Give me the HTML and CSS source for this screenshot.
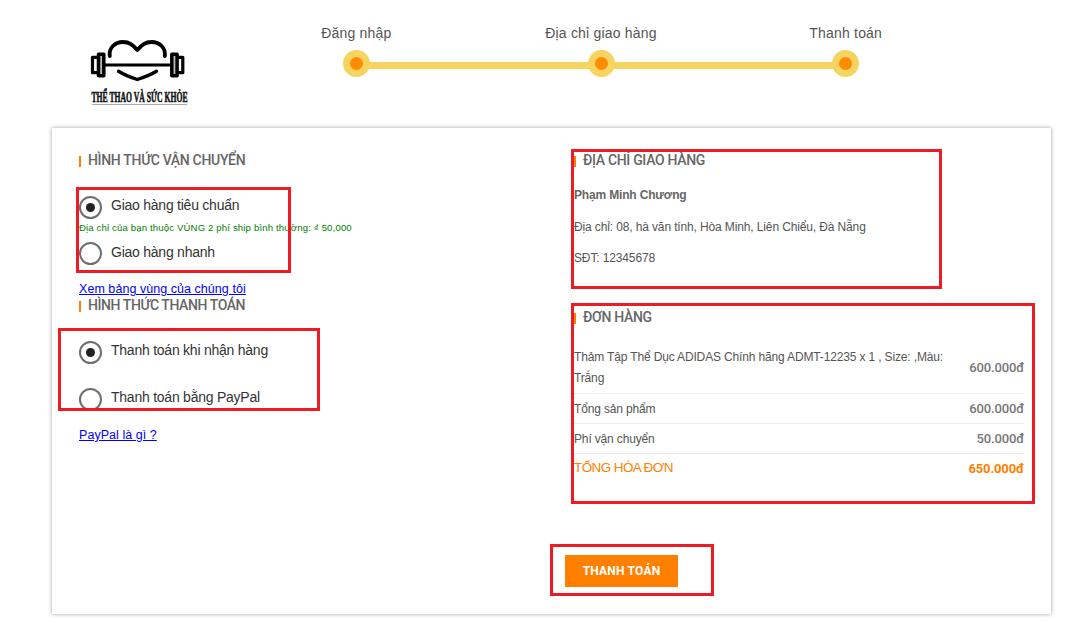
FILE: index.html
```html
<!DOCTYPE html>
<html lang="vi">
<head>
<meta charset="utf-8">
<title>Thanh toán</title>
<link rel="stylesheet" href="styles.css">
</head>
<body>
<header class="header">
  <svg class="logo" viewBox="0 0 100 72" role="img" aria-label="Thể thao và sức khỏe">
    <g fill="none" stroke="#000" stroke-linecap="round" stroke-linejoin="round">
      <path stroke-width="3.8" d="M19.800 20C18.500 12 25 6 33 6C40 6 43 9.500 47.300 14C51.600 9.500 54.600 6 61.600 6C69.600 6 76 12 74.800 20"/>
      <path stroke-width="3.4" d="M28.500 35.300Q36 40 47.300 43.500Q58.600 40 66.500 35.300"/>
      <path stroke-width="3.200" stroke-linecap="butt" d="M15 29H81"/>
      <path fill="#bbb" stroke-width="3.500" d="M8.500 18.300H13.800V39.700H8.500ZM81.800 18.300H87.100V39.700H81.800Z"/>
      <path stroke-width="3.200" d="M7 21.300H2.500V36.700H7M88.500 21.300H92.800V36.700H88.500"/>
    </g>
    <text class="logo-text" x="1.500" y="65.500" textLength="96" lengthAdjust="spacingAndGlyphs">THỂ THAO VÀ SỨC KHỎE</text>
    <path d="M2 68.500H97" stroke="#aaa" stroke-width="1"/>
  </svg>
  <ol class="steps">
    <li class="step"><span class="step-label">Đăng nhập</span><span class="dot"></span></li>
    <li class="step"><span class="step-label">Địa chỉ giao hàng</span><span class="dot"></span></li>
    <li class="step"><span class="step-label">Thanh toán</span><span class="dot"></span></li>
  </ol>
</header>
<main class="card">
  <section class="methods">
    <h2 class="title">HÌNH THỨC VẬN CHUYỂN</h2>
    <div class="shipping">
      <label class="option"><span class="radio checked"></span><span class="option-label">Giao hàng tiêu chuẩn</span></label>
      <p class="fee">Địa chỉ của bạn thuộc VÙNG 2 phí ship bình thường: ₫ 50,000</p>
      <label class="option"><span class="radio"></span><span class="option-label express">Giao hàng nhanh</span></label>
    </div>
    <a class="link" href="#">Xem bảng vùng của chúng tôi</a>
    <h2 class="title payment-title">HÌNH THỨC THANH TOÁN</h2>
    <div class="payment">
      <label class="option"><span class="radio checked"></span><span class="option-label">Thanh toán khi nhận hàng</span></label>
      <label class="option"><span class="radio"></span><span class="option-label">Thanh toán bằng PayPal</span></label>
    </div>
    <a class="link" href="#">PayPal là gì ?</a>
  </section>
  <section class="summary">
    <h2 class="title">ĐỊA CHỈ GIAO HÀNG</h2>
    <div class="address">
      <strong class="name">Phạm Minh Chương</strong>
      <span>Địa chỉ: 08, hà văn tính, Hòa Minh, Liên Chiểu, Đà Nẵng</span>
      <span class="phone">SĐT: 12345678</span>
    </div>
    <h2 class="title">ĐƠN HÀNG</h2>
    <div class="order">
      <div class="row product"><span class="item">Thảm Tập Thể Dục ADIDAS Chính hãng ADMT-12235 x 1 , Size: ,Màu: Trắng</span><b class="price">600.000đ</b></div>
      <div class="row"><span>Tổng sản phẩm</span><b class="price">600.000đ</b></div>
      <div class="row"><span>Phí vận chuyển</span><b class="price">50.000đ</b></div>
      <div class="row total"><span class="total-label">TỔNG HÓA ĐƠN</span><b class="price">650.000đ</b></div>
    </div>
    <button class="pay">THANH TOÁN</button>
  </section>
</main>
<div class="mark mark-shipping"></div>
<div class="mark mark-payment"></div>
<div class="mark mark-address"></div>
<div class="mark mark-order"></div>
<div class="mark mark-pay"></div>
</body>
</html>
```

FILE: styles.css
```css
* { box-sizing: border-box; }
body {
  margin: 0;
  height: 622px;
  overflow: hidden;
  position: relative;
  background: #fff;
  color: #555;
  font: 12px/20px "Liberation Sans", Arial, sans-serif;
}
.header { display: flex; height: 128px; padding-left: 90px; }
.logo { width: 100px; height: 72px; margin: 36px 44px 0 0; overflow: visible; }
.logo-text { font: bold 15px "Liberation Serif", serif; fill: #111; stroke: #111; stroke-width: .6px; }
.steps {
  display: flex;
  width: 734px;
  height: 77px;
  margin: 0;
  padding: 23px 0 0;
  list-style: none;
  background: linear-gradient(#f7d35f, #f7d35f) 123px 62px / 489px 7px no-repeat;
}
.step { flex: 1; display: flex; flex-direction: column; align-items: center; gap: 7px; }
.step-label { font-size: 14px; letter-spacing: .2px; white-space: nowrap; }
.dot { width: 27px; height: 27px; border: 7px solid #f7d35f; border-radius: 50%; background: #ff8c00; }

.card {
  display: flex;
  width: 999px;
  height: 486px;
  margin-left: 52px;
  padding: 22px 27px 0;
  background: #fff;
  box-shadow: 0 0 4px rgba(0, 0, 0, .38);
}
.methods { width: 495px; }
.summary { width: 450px; }
.title {
  display: flex;
  align-items: center;
  height: 20px;
  margin: 0;
  color: #666;
  font: 500 14px/20px Roboto, sans-serif;
  letter-spacing: -.32px;
  white-space: nowrap;
}
.title::before { content: ""; width: 2px; height: 11px; margin: 2px 7px 0 0; background: #ff8000; }
.payment-title { letter-spacing: -.42px; }

.shipping { padding-top: 23px; height: 109px; }
.option { display: flex; gap: 9px; height: 29px; }
.radio {
  display: flex;
  align-items: center;
  justify-content: center;
  width: 23px;
  height: 23px;
  margin-top: 3px;
  border: 2px solid #6e6e6e;
  border-radius: 50%;
}
.checked::after { content: ""; width: 9px; height: 9px; border-radius: 50%; background: #212121; }
.option-label { margin-top: 2px; color: #333; font-size: 14px; letter-spacing: -.24px; white-space: nowrap; }
.express { margin-top: 3px; }
.fee { margin: 0 0 1px; height: 16px; color: #008000; font-size: 9.6px; line-height: 12px; letter-spacing: .14px; white-space: nowrap; }
.link { display: block; width: max-content; height: 16px; color: #00f; font-size: 12.5px; line-height: 21px; letter-spacing: .05px; }
.payment { display: flex; flex-direction: column; gap: 18px; padding-top: 23px; height: 110px; }

.address { display: flex; flex-direction: column; padding-top: 15px; height: 137px; letter-spacing: -.13px; }
.name { color: #666; margin-bottom: 12px; letter-spacing: -.17px; }
.phone { margin-top: 11px; }
.order { margin-top: 20px; letter-spacing: -.15px; }
.row { display: flex; align-items: center; justify-content: space-between; height: 30px; border-bottom: 1px solid #ebebeb; }
.product { height: 47px; line-height: 21px; padding-bottom: 4px; }
.item { width: 375px; }
.price { color: #777; font: 500 13px/20px Roboto, sans-serif; letter-spacing: -.15px; }
.total { border: 0; color: #ff8000; }
.total-label { font-size: 13.5px; letter-spacing: -.6px; padding-bottom: 2px; }
.total .price { color: #ff8000; font-weight: 700; }
.pay {
  display: block;
  width: 113px;
  height: 32px;
  margin: 71px 0 0 -9px;
  padding: 1px 0 0;
  border: 0;
  background: #ff8000;
  color: #fff;
  font: bold 12px/31px Roboto, sans-serif;
  letter-spacing: .2px;
}

/* Highlight frames laid over the form */
.mark { position: absolute; border: 3px solid #ed1c24; pointer-events: none; }
.mark-shipping { left: 76px; top: 187px; width: 215px; height: 86px; }
.mark-payment { left: 58px; top: 328px; width: 262px; height: 83px; }
.mark-address { left: 571px; top: 149px; width: 371px; height: 140px; }
.mark-order { left: 571px; top: 303px; width: 464px; height: 201px; }
.mark-pay { left: 550px; top: 544px; width: 164px; height: 52px; }
```
